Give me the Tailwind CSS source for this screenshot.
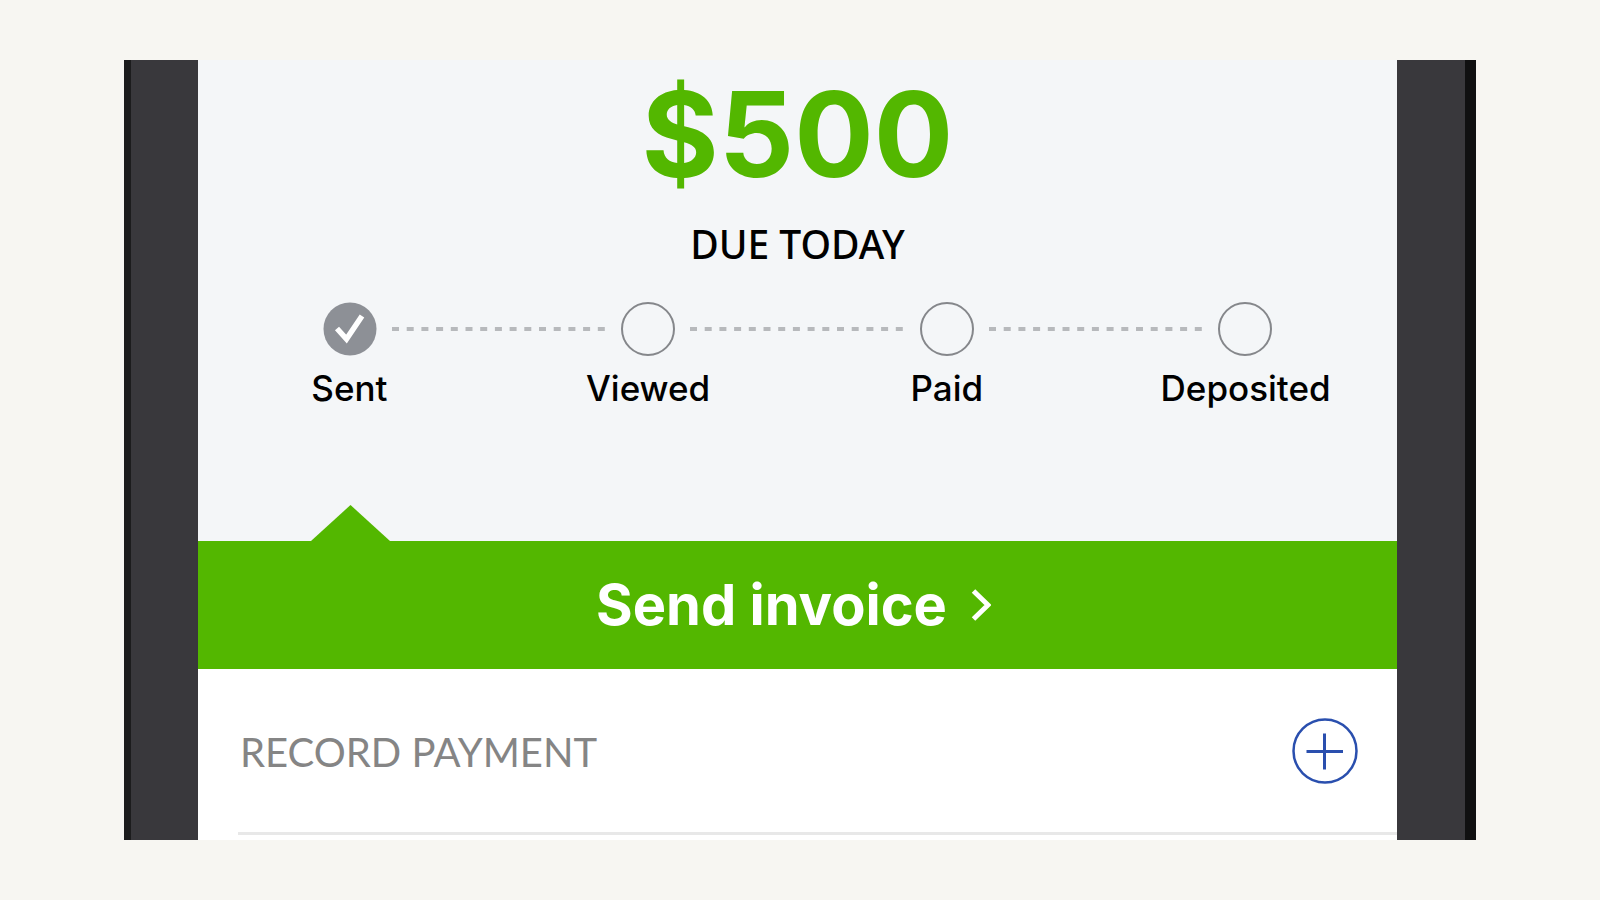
<!DOCTYPE html>
<html lang="en">
<head>
  <meta charset="UTF-8">
  <meta name="viewport" content="width=device-width, initial-scale=1.0">
  <title>Invoice status</title>
  <script src="https://cdn.jsdelivr.net/npm/@tailwindcss/browser@4"></script>
</head>
<body class="bg-[#f7f6f2] font-[Inter,sans-serif]">

  <main class="flex min-h-screen px-[124px] py-[60px]">
    <!-- Phone frame -->
    <div class="flex min-w-0 flex-1 border-l-[7px] border-r-[11px] border-l-[#1c1c1d] border-r-[#101011] bg-[#39383c] pl-[67px] pr-[68px]">
      <div class="flex min-w-0 flex-1 flex-col bg-white">

        <!-- Amount and progress -->
        <section class="flex flex-col bg-[#f4f6f8] pt-3.5 text-black">
          <h1 class="text-center text-[118px] leading-[120px] font-bold text-[#53b700]">$500</h1>
          <p class="mt-6 text-center font-['Noto_Sans',sans-serif] text-[39px] leading-[52px] font-medium">DUE TODAY</p>

          <div class="mt-8 flex items-center px-[125px]">
            <svg class="size-[54px] shrink-0" viewBox="0 0 54 54" role="img" aria-label="Done">
              <circle cx="27" cy="27" r="26.5" fill="#8d9096"/>
              <path d="M14 26.5 L23.5 37 L39 14" fill="none" stroke="#fff" stroke-width="5.5"/>
            </svg>
            <svg class="mx-[15px] h-1 w-0 flex-1"><line x1="0" y1="2" x2="100%" y2="2" stroke="#b7b9bc" stroke-width="4" stroke-dasharray="7 7.7"/></svg>
            <span class="size-[54px] shrink-0 rounded-full border-2 border-[#85878b]"></span>
            <svg class="mx-[15px] h-1 w-0 flex-1"><line x1="0" y1="2" x2="100%" y2="2" stroke="#b7b9bc" stroke-width="4" stroke-dasharray="7 7.7"/></svg>
            <span class="size-[54px] shrink-0 rounded-full border-2 border-[#85878b]"></span>
            <svg class="mx-[15px] h-1 w-0 flex-1"><line x1="0" y1="2" x2="100%" y2="2" stroke="#b7b9bc" stroke-width="4" stroke-dasharray="7 7.7"/></svg>
            <span class="size-[54px] shrink-0 rounded-full border-2 border-[#85878b]"></span>
          </div>

          <ol class="mt-2 grid grid-cols-4 px-0.5 text-center text-[35px] leading-[48px] font-medium">
            <li>Sent</li>
            <li>Viewed</li>
            <li>Paid</li>
            <li>Deposited</li>
          </ol>

          <svg class="mt-[92px] ml-[113px] h-[37px] w-[80px]" viewBox="0 0 80 37"><path d="M0 37 L39.5 1 L79 37 Z" fill="#53b700"/></svg>
        </section>

        <button type="button" class="flex h-32 items-center justify-center gap-6 bg-[#53b700] pr-2 text-[56px] font-bold text-white">
          Send invoice
          <svg class="h-9 w-5" viewBox="0 0 20 36"><path d="M2.5 4 L17 18 L2.5 32" fill="none" stroke="#fff" stroke-width="5"/></svg>
        </button>

        <!-- Record payment -->
        <section class="flex flex-1 flex-col pb-[5px] pl-10">
          <div class="flex flex-1 items-center justify-between border-b-[3px] border-[#e8e8e8] pr-[39px]">
            <h2 id="record" class="pt-0.5 pl-0.5 font-[Lato,sans-serif] text-[40px] leading-[52px] text-[#858585]">RECORD PAYMENT</h2>
            <button type="button" aria-labelledby="record">
              <svg class="size-[66px]" viewBox="0 0 66 66" fill="none" stroke="#2a4fae">
                <circle cx="33" cy="33" r="31.5" stroke-width="2.5"/>
                <path d="M32.5 15.5 V51.5 M14.5 33.5 H51" stroke-width="3"/>
              </svg>
            </button>
          </div>
        </section>

      </div>
    </div>
  </main>

</body>
</html>
